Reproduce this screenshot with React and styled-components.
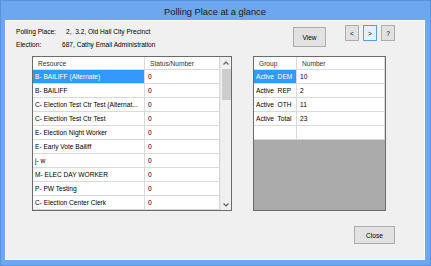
import styled, { createGlobalStyle } from 'styled-components';

const GlobalStyle = createGlobalStyle`
  html, body {
    margin: 0;
    padding: 0;
    background: #6ba6ee;
  }
  * {
    box-sizing: border-box;
  }
`;

const WindowFrame = styled.div`
  width: 431px;
  height: 266px;
  background: #6ca7ef;
  border: 1px solid #5a93dc;
  padding: 0 5px 5px 4px;
  display: flex;
  flex-direction: column;
  font-family: 'Liberation Sans', Arial, sans-serif;
  color: #000;
`;

const TitleBar = styled.div`
  height: 19px;
  display: flex;
  align-items: center;
  justify-content: center;
  font-size: 9.3px;
  color: #1a1a1a;
  padding-top: 2px;
`;

const Body = styled.div`
  flex: 1;
  background: #f0f0f0;
  border: 1px solid #f7f9fc;
  display: flex;
  flex-direction: column;
  font-size: 6.6px;
`;

const TopRow = styled.div`
  height: 35px;
  display: flex;
  align-items: flex-start;
  padding-right: 29px;
`;

const Info = styled.div`
  flex: 1;
  padding: 4px 0 0 10px;
  line-height: 13px;
`;

const InfoRow = styled.div`
  display: flex;
`;

const InfoLabel = styled.span`
  width: 46px;
`;

const InfoValue = styled.span`
  white-space: pre;
  margin-left: ${(p) => p.$shift || 0}px;
`;

const Button = styled.button`
  font-family: inherit;
  font-size: 6.6px;
  color: #000;
  background: ${(p) => (p.$focused ? '#e5f1fb' : '#e1e1e1')};
  border: 1px solid ${(p) => (p.$focused ? '#5b9de0' : '#adadad')};
  padding: 0;
  width: ${(p) => p.$w}px;
  height: ${(p) => p.$h}px;
  display: flex;
  align-items: center;
  justify-content: center;
`;

const ViewButton = styled(Button)`
  margin-top: 6px;
`;

const NavGroup = styled.div`
  display: flex;
  gap: 4px;
  margin: 4px 0 0 19px;
`;

const TablesRow = styled.div`
  display: flex;
  align-items: flex-start;
  gap: 21px;
  padding-left: 26px;
`;

const Grid = styled.div`
  width: ${(p) => p.$w}px;
  height: 155px;
  border: 1px solid #6b6b6b;
  background: ${(p) => p.$fill || '#fff'};
  display: flex;
  overflow: hidden;
`;

const Columns = styled.div`
  flex: 1;
  display: flex;
  flex-direction: column;
`;

const Row = styled.div`
  display: grid;
  grid-template-columns: ${(p) => p.$cols};
  height: ${(p) => (p.$head ? 13 : 14)}px;
  background: #fff;
  border-bottom: 1px solid #dadada;
  flex-shrink: 0;
`;

const Cell = styled.div`
  display: flex;
  align-items: center;
  padding-left: ${(p) => (p.$head ? 5 : 2)}px;
  white-space: pre;
  overflow: hidden;
  border-right: 1px solid #dadada;
  background: ${(p) => (p.$selected ? '#3399ff' : 'transparent')};
  color: ${(p) => (p.$selected ? '#fff' : p.$head ? '#333' : '#000')};
  &:last-child {
    padding-left: ${(p) => (p.$head ? 5 : 3)}px;
  }
`;

const ScrollBar = styled.div`
  width: 11px;
  background: #f0f0f0;
  border-left: 1px solid #e8e8e8;
  display: flex;
  flex-direction: column;
  align-items: center;
`;

const ScrollArrow = styled.div`
  height: 11px;
  display: flex;
  align-items: center;
  justify-content: center;
`;

const ScrollThumb = styled.div`
  width: 9px;
  height: 31px;
  background: #cdcdcd;
  margin-top: 1px;
`;

const ScrollSpacer = styled.div`
  flex: 1;
`;

const Footer = styled.div`
  display: flex;
  justify-content: flex-end;
  padding: 15px 29px 0 0;
`;

const Chevron = ({ up }) => (
  <svg width="6" height="4" viewBox="0 0 6 4">
    <path
      d={up ? 'M0.5 3.5 L3 1 L5.5 3.5' : 'M0.5 0.5 L3 3 L5.5 0.5'}
      fill="none"
      stroke="#606060"
      strokeWidth="1.2"
    />
  </svg>
);

const resources = [
  'B- BAILIFF (Alternate)',
  'B- BAILIFF',
  'C- Election Test Ctr Test (Alternat...',
  'C- Election Test Ctr Test',
  'E- Election Night Worker',
  'E- Early Vote Bailiff',
  'j- w',
  'M- ELEC DAY WORKER',
  'P- PW Testing',
  'C- Election Center Clerk',
];

const groups = [
  ['Active  DEM', '10'],
  ['Active  REP', '2'],
  ['Active  OTH', '11'],
  ['Active  Total', '23'],
  ['', ''],
];

const LEFT_COLS = '112px 75px';
const RIGHT_COLS = '43px 88px';

export default function App() {
  return (
    <>
      <GlobalStyle />
      <WindowFrame>
        <TitleBar>Polling Place at a glance</TitleBar>
        <Body>
          <TopRow>
            <Info>
              <InfoRow>
                <InfoLabel>Polling Place:</InfoLabel>
                <InfoValue $shift={4}>2,  3.2, Old Hall City Precinct</InfoValue>
              </InfoRow>
              <InfoRow>
                <InfoLabel>Election:</InfoLabel>
                <InfoValue>687, Cathy Email Administration</InfoValue>
              </InfoRow>
            </Info>
            <ViewButton $w={33} $h={20}>View</ViewButton>
            <NavGroup>
              <Button $w={14} $h={16}>&lt;</Button>
              <Button $w={14} $h={16} $focused>&gt;</Button>
              <Button $w={14} $h={16}>?</Button>
            </NavGroup>
          </TopRow>

          <TablesRow>
            <Grid $w={200}>
              <Columns>
                <Row $cols={LEFT_COLS} $head>
                  <Cell $head>Resource</Cell>
                  <Cell $head>Status/Number</Cell>
                </Row>
                {resources.map((name, i) => (
                  <Row key={name} $cols={LEFT_COLS}>
                    <Cell $selected={i === 0}>{name}</Cell>
                    <Cell>0</Cell>
                  </Row>
                ))}
              </Columns>
              <ScrollBar>
                <ScrollArrow>
                  <Chevron up />
                </ScrollArrow>
                <ScrollThumb />
                <ScrollSpacer />
                <ScrollArrow>
                  <Chevron />
                </ScrollArrow>
              </ScrollBar>
            </Grid>

            <Grid $w={133} $fill="#ababab">
              <Columns>
                <Row $cols={RIGHT_COLS} $head>
                  <Cell $head>Group</Cell>
                  <Cell $head>Number</Cell>
                </Row>
                {groups.map(([g, n], i) => (
                  <Row key={i} $cols={RIGHT_COLS}>
                    <Cell $selected={i === 0}>{g}</Cell>
                    <Cell>{n}</Cell>
                  </Row>
                ))}
              </Columns>
            </Grid>
          </TablesRow>

          <Footer>
            <Button $w={41} $h={18}>Close</Button>
          </Footer>
        </Body>
      </WindowFrame>
    </>
  );
}
